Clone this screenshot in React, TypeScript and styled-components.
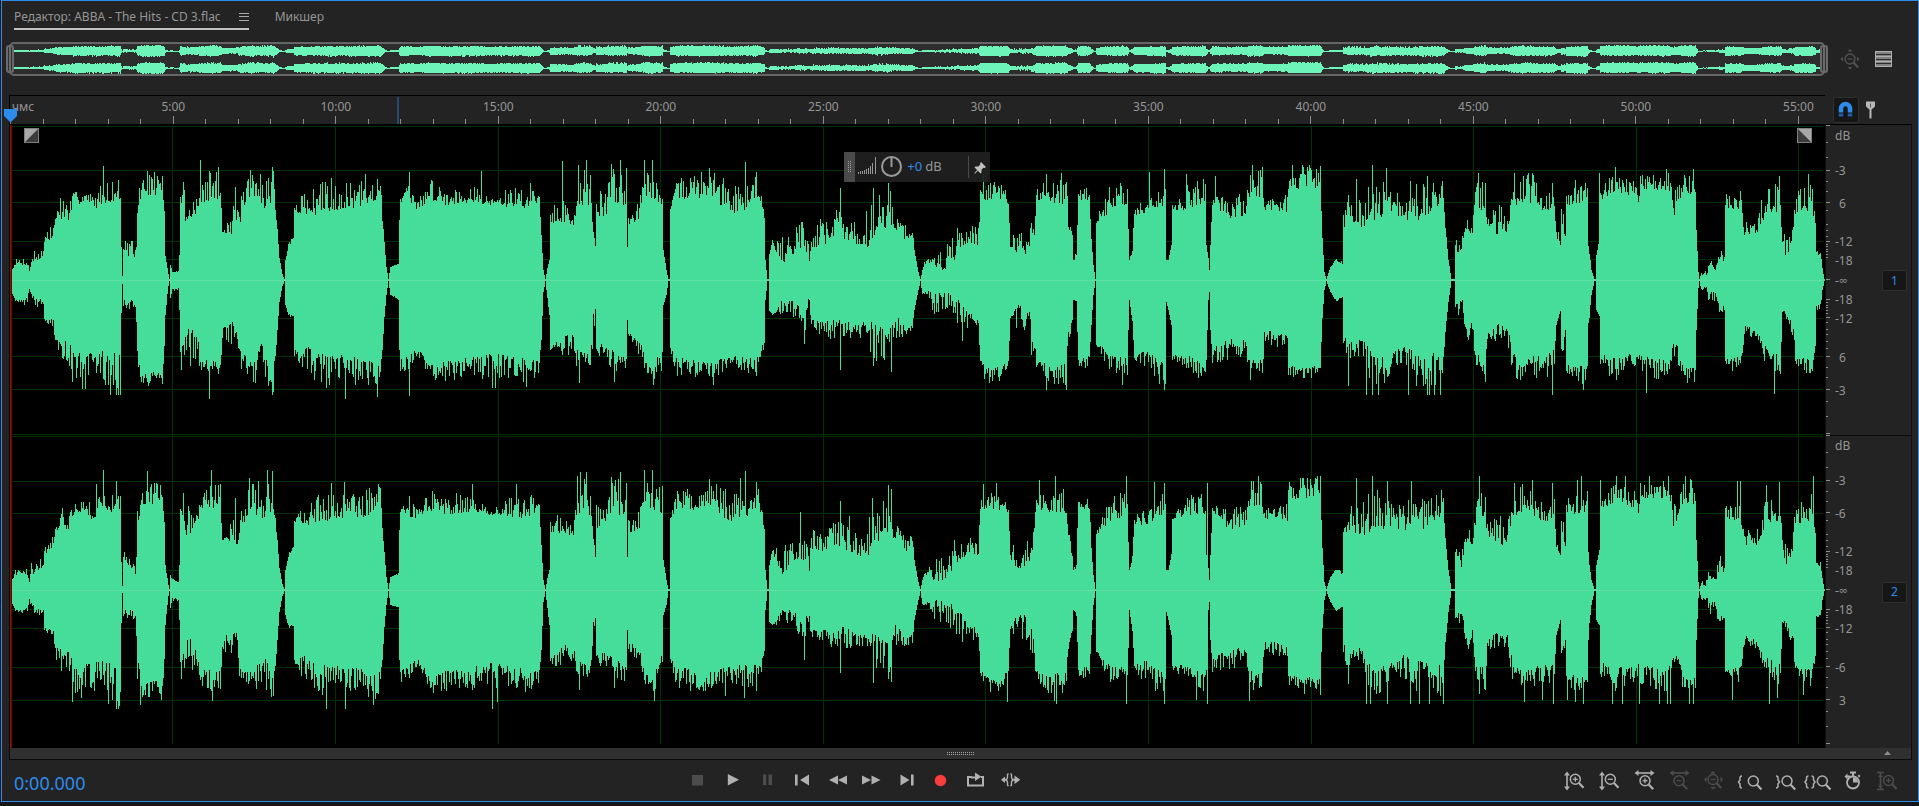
import React from 'react';
import styled, { createGlobalStyle } from 'styled-components';

const ACCENT = '#2d8ceb';
const ICON = '#b0b0b0';
const DIM = '#4c4c4c';

const GlobalStyle = createGlobalStyle`
  * { box-sizing: border-box; }
  body {
    margin: 0;
    background: #161616;
    color: #969696;
    font: 12px/16px "Noto Sans", "Open Sans", sans-serif;
  }
  button, input {
    margin: 0;
    padding: 0;
    border: 0;
    background: none;
    color: inherit;
    font: inherit;
  }
  svg { display: block; }
`;

/* ---------- waveform data ---------- */

// Envelope points: position, quiet and loud level above the axis, quiet and loud level below it.
type Point = [number, number, number, number, number];

const ENVELOPE: Point[] = [
  [2, 9, 9, 12, 12], [6, 15, 21, 20, 21], [18, 15, 22, 17, 26], [20, 8, 9, 8, 9], [22, 15, 28, 13, 19],
  [28, 17, 34, 19, 27], [34, 25, 31, 19, 25], [35, 34, 49, 38, 41], [44, 42, 55, 39, 48], [46, 60, 64, 58, 68],
  [52, 60, 82, 59, 85], [61, 60, 80, 63, 84], [63, 74, 86, 73, 100], [75, 78, 93, 73, 108], [83, 70, 85, 72, 100],
  [93, 76, 96, 70, 100], [111, 80, 100, 75, 115], [112, 28, 38, 30, 34], [113, 3, 5, 3, 5], [114, 30, 40, 20, 30],
  [126, 15, 37, 20, 28], [127, 32, 34, 40, 50], [128, 63, 90, 63, 90], [132, 85, 100, 95, 106], [146, 85, 108, 90, 110],
  [153, 88, 105, 95, 105], [155, 68, 75, 62, 85], [156, 23, 25, 33, 35], [159, 5, 6, 5, 6], [160, 1, 1, 1, 1],
  [161, 15, 15, 18, 18], [163, 8, 11, 8, 11], [169, 8, 9, 8, 11], [170, 25, 25, 30, 30], [171, 80, 88, 72, 94],
  [177, 55, 98, 50, 70], [181, 55, 78, 48, 85], [189, 70, 85, 54, 75], [190, 75, 90, 80, 95], [201, 78, 112, 80, 100],
  [211, 80, 105, 80, 102], [213, 48, 50, 48, 60], [222, 45, 70, 42, 64], [228, 45, 75, 40, 58], [230, 55, 80, 68, 90],
  [236, 70, 95, 75, 90], [244, 78, 110, 85, 105], [252, 70, 105, 60, 90], [264, 78, 110, 85, 115], [266, 65, 75, 75, 78],
  [268, 50, 52, 50, 52], [270, 22, 22, 22, 22], [273, 6, 6, 6, 6], [275, 1, 1, 1, 1], [276, 20, 20, 25, 25],
  [279, 32, 38, 33, 38], [284, 42, 43, 36, 38], [285, 68, 72, 70, 80], [295, 65, 88, 65, 90], [305, 65, 90, 70, 100],
  [317, 68, 100, 75, 105], [338, 72, 95, 75, 100], [358, 72, 100, 80, 110], [371, 85, 102, 82, 110], [373, 55, 70, 70, 70],
  [375, 38, 38, 37, 37], [377, 13, 13, 15, 15], [379, 1, 1, 1, 1], [381, 13, 13, 15, 15], [389, 15, 17, 17, 20],
  [390, 60, 60, 70, 70], [391, 78, 82, 80, 92], [399, 74, 95, 75, 90], [409, 70, 80, 68, 75], [420, 80, 100, 85, 100],
  [440, 74, 90, 80, 100], [460, 78, 97, 78, 100], [481, 75, 80, 72, 95], [501, 72, 92, 76, 100], [522, 72, 96, 80, 100],
  [530, 80, 90, 80, 95], [532, 45, 45, 60, 60], [534, 10, 10, 12, 12], [536, 1, 1, 1, 1], [538, 12, 12, 18, 18],
  [540, 20, 20, 35, 35], [541, 55, 75, 68, 75], [554, 58, 80, 55, 78], [564, 52, 60, 55, 70], [568, 75, 115, 70, 90],
  [581, 75, 105, 75, 90], [584, 45, 60, 32, 60], [586, 33, 34, 28, 30], [587, 60, 90, 65, 75], [595, 58, 85, 60, 80],
  [601, 75, 112, 65, 90], [617, 75, 108, 75, 90], [618, 33, 33, 40, 40], [619, 55, 70, 50, 60], [630, 60, 80, 62, 75],
  [633, 85, 95, 60, 85], [635, 85, 110, 80, 95], [643, 80, 100, 90, 105], [653, 75, 103, 60, 90], [654, 30, 30, 25, 25],
  [657, 10, 10, 15, 15], [659, 1, 1, 1, 1], [660, 1, 1, 1, 1], [661, 70, 72, 68, 70], [668, 82, 100, 75, 100],
  [684, 80, 105, 80, 100], [700, 85, 110, 82, 100], [721, 66, 95, 75, 92], [735, 70, 98, 75, 97], [749, 84, 105, 75, 100],
  [755, 60, 65, 60, 65], [756, 20, 20, 20, 20], [758, 1, 1, 1, 1], [759, 1, 1, 1, 1], [760, 25, 30, 30, 35],
  [763, 38, 42, 35, 35], [772, 14, 43, 20, 35], [782, 25, 45, 20, 33], [790, 30, 60, 25, 45], [796, 30, 55, 30, 60],
  [800, 18, 30, 15, 30], [802, 30, 65, 40, 50], [815, 35, 60, 40, 55], [827, 45, 72, 40, 60], [837, 40, 65, 35, 60],
  [847, 35, 55, 45, 55], [859, 32, 70, 40, 65], [866, 45, 80, 45, 80], [880, 55, 95, 50, 90], [886, 50, 70, 35, 60],
  [896, 38, 55, 45, 55], [903, 45, 58, 45, 55], [905, 30, 30, 30, 30], [909, 8, 8, 10, 10], [911, 1, 1, 1, 1],
  [913, 10, 10, 14, 15], [915, 15, 18, 12, 15], [925, 8, 28, 10, 32], [935, 10, 35, 10, 30], [945, 20, 50, 15, 42],
  [957, 35, 50, 30, 50], [969, 35, 55, 40, 50], [971, 80, 90, 80, 95], [982, 80, 98, 90, 105], [996, 80, 92, 82, 98],
  [999, 75, 80, 80, 82], [1001, 30, 40, 35, 40], [1008, 20, 55, 25, 50], [1019, 25, 50, 25, 50], [1025, 45, 65, 50, 75],
  [1027, 80, 90, 80, 90], [1039, 78, 105, 85, 105], [1057, 75, 105, 80, 105], [1059, 50, 60, 50, 60], [1063, 32, 50, 35, 48],
  [1064, 20, 20, 20, 20], [1067, 20, 33, 20, 28], [1069, 80, 90, 80, 90], [1080, 80, 92, 75, 85], [1082, 40, 45, 45, 45],
  [1084, 15, 15, 15, 15], [1086, 1, 1, 1, 1], [1087, 55, 60, 60, 65], [1100, 68, 95, 75, 90], [1118, 75, 98, 78, 98],
  [1120, 20, 20, 20, 20], [1123, 28, 35, 40, 42], [1125, 65, 75, 75, 80], [1137, 65, 80, 70, 95], [1156, 75, 98, 85, 108],
  [1157, 20, 20, 22, 22], [1159, 20, 20, 30, 30], [1162, 35, 36, 45, 45], [1163, 70, 75, 75, 80], [1178, 70, 95, 75, 90],
  [1196, 75, 100, 85, 102], [1197, 35, 35, 80, 80], [1199, 22, 22, 20, 20], [1200, 10, 10, 12, 12], [1201, 35, 35, 50, 50],
  [1203, 75, 85, 70, 85], [1219, 60, 85, 55, 80], [1237, 65, 85, 60, 75], [1239, 82, 105, 80, 100], [1253, 82, 112, 80, 100],
  [1255, 70, 80, 50, 60], [1278, 68, 85, 55, 72], [1279, 90, 110, 85, 95], [1294, 92, 112, 88, 98], [1311, 90, 112, 85, 98],
  [1313, 42, 42, 38, 38], [1315, 8, 8, 10, 10], [1317, 1, 1, 1, 1], [1321, 13, 13, 12, 12], [1327, 20, 23, 20, 22],
  [1333, 15, 18, 16, 18], [1334, 48, 70, 50, 65], [1339, 60, 88, 62, 80], [1353, 52, 85, 55, 75], [1363, 60, 105, 75, 105],
  [1378, 60, 95, 75, 100], [1394, 60, 85, 65, 85], [1410, 58, 95, 70, 110], [1434, 75, 95, 75, 110], [1436, 50, 55, 50, 55],
  [1439, 20, 20, 22, 22], [1442, 1, 1, 1, 1], [1445, 1, 1, 1, 1], [1446, 30, 42, 25, 40], [1453, 20, 43, 20, 30],
  [1455, 45, 50, 40, 45], [1459, 48, 65, 55, 60], [1463, 45, 48, 38, 50], [1466, 65, 95, 75, 85], [1476, 68, 102, 75, 100],
  [1478, 55, 65, 50, 60], [1488, 45, 75, 42, 60], [1498, 45, 70, 42, 60], [1503, 75, 85, 70, 95], [1512, 75, 105, 80, 100],
  [1523, 75, 105, 75, 95], [1533, 68, 85, 75, 100], [1545, 70, 90, 70, 90], [1547, 42, 60, 45, 45], [1551, 35, 36, 30, 31],
  [1552, 60, 75, 60, 75], [1556, 40, 60, 50, 65], [1557, 75, 90, 85, 95], [1578, 78, 98, 85, 105], [1579, 30, 40, 40, 50],
  [1582, 10, 10, 15, 15], [1585, 1, 1, 1, 1], [1586, 1, 1, 1, 1], [1587, 25, 25, 30, 30], [1590, 40, 41, 35, 36],
  [1591, 80, 95, 70, 85], [1606, 88, 106, 78, 100], [1625, 82, 100, 72, 90], [1629, 76, 85, 72, 85], [1631, 90, 106, 75, 95],
  [1659, 90, 108, 80, 102], [1664, 60, 85, 62, 75], [1669, 75, 95, 65, 85], [1674, 88, 105, 85, 100], [1686, 85, 112, 88, 105],
  [1687, 50, 50, 50, 50], [1689, 8, 8, 8, 8], [1690, 1, 1, 1, 1], [1692, 5, 9, 8, 10], [1697, 4, 10, 6, 10],
  [1700, 12, 22, 12, 25], [1706, 8, 15, 12, 20], [1710, 20, 35, 25, 38], [1715, 17, 25, 25, 30], [1716, 70, 85, 80, 85],
  [1731, 70, 90, 75, 95], [1735, 45, 60, 45, 55], [1747, 45, 60, 50, 58], [1755, 60, 92, 65, 80], [1771, 70, 95, 75, 95],
  [1773, 35, 55, 30, 33], [1777, 22, 45, 32, 40], [1784, 40, 65, 45, 60], [1786, 65, 85, 75, 85], [1802, 70, 100, 80, 100],
  [1806, 55, 62, 65, 70], [1807, 20, 28, 25, 30], [1811, 25, 30, 22, 30], [1813, 12, 12, 10, 10], [1815, 1, 1, 1, 1],
];

type Peaks = Record<number, number>;

const PEAKS_UP_1: Peaks = {
  51: 82, 94: 114, 138: 109, 145: 108, 174: 98, 191: 120, 200: 108, 209: 113, 226: 93, 241: 110, 251: 106, 263: 113,
  264: 109, 322: 102, 356: 106, 400: 108, 422: 100, 472: 109, 553: 119, 577: 120, 569: 115, 602: 116, 611: 120,
  617: 112, 635: 120, 643: 120, 700: 112, 736: 118, 747: 108, 831: 92, 864: 92, 879: 97, 974: 106, 1037: 106,
  1052: 107, 1140: 108, 1155: 111, 1177: 106, 1206: 104, 1243: 115, 1253: 113, 1283: 115, 1293: 115, 1300: 115,
  1311: 114, 1347: 101, 1363: 115, 1377: 112, 1401: 99, 1418: 104, 1433: 99, 1469: 107, 1505: 107, 1519: 107,
  1523: 107, 1543: 97, 1566: 100, 1590: 107, 1606: 113, 1657: 111, 1684: 111, 1770: 104, 1799: 106,
};

const PEAKS_DOWN_1: Peaks = {
  76: 109, 101: 115, 107: 115, 109: 115, 200: 119, 263: 115, 264: 112, 317: 108, 336: 119, 368: 117, 400: 116,
  483: 108, 486: 108, 517: 107, 570: 103, 605: 102, 644: 105, 704: 105, 831: 90, 864: 86, 882: 92, 795: 64,
  953: 61, 1022: 75, 1037: 110, 1057: 110, 1113: 105, 1155: 110, 1339: 106, 1357: 115, 1363: 115, 1369: 115,
  1399: 115, 1418: 115, 1420: 115, 1425: 115, 1431: 115, 1543: 115, 1574: 110, 1637: 113, 1765: 114,
};

const PEAKS_UP_2: Peaks = {
  87: 106, 94: 120, 107: 109, 138: 119, 145: 107, 174: 97, 202: 120, 209: 105, 226: 92, 240: 112, 258: 120,
  263: 119, 322: 107, 335: 108, 369: 106, 423: 99, 447: 97, 463: 106, 507: 106, 568: 114, 571: 118, 577: 118,
  602: 113, 611: 118, 617: 107, 635: 120, 643: 120, 653: 104, 707: 106, 731: 112, 736: 119, 747: 108, 791: 78,
  831: 89, 840: 74, 863: 92, 879: 105, 882: 101, 974: 106, 987: 107, 1030: 110, 1046: 114, 1117: 114, 1145: 108,
  1155: 107, 1198: 107, 1242: 109, 1249: 114, 1294: 112, 1308: 114, 1311: 114, 1347: 112, 1363: 114, 1378: 109,
  1402: 109, 1432: 100, 1470: 114, 1505: 107, 1523: 110, 1543: 107, 1568: 110, 1572: 114, 1591: 110, 1607: 114,
  1616: 114, 1640: 114, 1659: 114, 1676: 114, 1682: 110, 1728: 109, 1731: 109, 1757: 105, 1770: 108, 1804: 114,
};

const PEAKS_DOWN_2: Peaks = {
  63: 112, 72: 108, 99: 114, 107: 119, 109: 119, 131: 115, 152: 110, 203: 111, 264: 106, 317: 119, 336: 119,
  364: 115, 424: 103, 483: 119, 488: 112, 570: 100, 605: 98, 645: 111, 716: 106, 735: 108, 795: 70, 831: 83,
  864: 93, 882: 92, 953: 52, 998: 112, 1045: 111, 1047: 114, 1117: 114, 1155: 114, 1187: 110, 1198: 114, 1240: 111,
  1295: 104, 1311: 105, 1339: 94, 1357: 114, 1361: 114, 1378: 114, 1401: 114, 1410: 114, 1420: 114, 1434: 114,
  1470: 104, 1515: 112, 1533: 110, 1544: 114, 1558: 110, 1566: 112, 1574: 114, 1603: 114, 1613: 114, 1630: 114,
  1650: 114, 1658: 114, 1661: 114, 1680: 114, 1684: 114, 1723: 110, 1760: 114, 1768: 108, 1794: 105,
};

const random = (seed: number) => {
  let s = seed;
  return () => {
    s = (Math.imul(s, 1664525) + 1013904223) >>> 0;
    return s / 4294967296;
  };
};

const buildWave = (axis: number, scale: number, seed: number, peaksUp: Peaks = {}, peaksDown: Peaks = {}) => {
  const next = random(seed);
  let d = '';
  let p = 0;
  for (let x = 2; x < 1816; x++) {
    while (p < ENVELOPE.length - 2 && ENVELOPE[p + 1][0] <= x) p++;
    const a = ENVELOPE[p];
    const b = ENVELOPE[p + 1];
    const t = Math.min(1, (x - a[0]) / (b[0] - a[0]));
    const at = (i: number) => a[i] + (b[i] - a[i]) * t;
    const pick = (lo: number, hi: number) => lo + (hi - lo) * Math.pow(next(), 1.4) * 1.08;
    const up = Math.max(pick(at(1), at(2)), peaksUp[x] || 0);
    const down = Math.max(pick(at(3), at(4)), peaksDown[x] || 0);
    const y0 = Math.round(axis - up * scale);
    const y1 = Math.max(y0 + 1, Math.round(axis + down * scale));
    d += `M${x} ${y0}h1V${y1}h-1z`;
  }
  return d;
};

const CHANNELS = [
  {
    id: 1,
    axis: 155,
    grid: [1, 45, 77, 116, 134, 193, 231, 264, 309],
    d: buildWave(155, 1, 7, PEAKS_UP_1, PEAKS_DOWN_1),
  },
  {
    id: 2,
    axis: 465,
    grid: [311, 356, 388, 445, 484, 503, 542, 575],
    d: buildWave(465, 1, 91, PEAKS_UP_2, PEAKS_DOWN_2),
  },
];
const OVERVIEW = buildWave(7, 0.056, 11) + buildWave(24, 0.056, 23);

/* ---------- frame ---------- */

const Page = styled.main`
  display: flex;
  min-height: 100vh;
  padding: 0 0 4px 1px;
`;

const Panel = styled.section`
  display: flex;
  flex: 1;
  flex-direction: column;
  min-width: 0;
  border: 1px solid ${ACCENT};
  background: #232323;
`;

const Tabs = styled.nav`
  display: flex;
  align-items: flex-start;
  gap: 26px;
  height: 41px;
  padding: 8px 12px 0;
`;

const Tab = styled.button<{ $active?: boolean }>`
  display: flex;
  align-items: center;
  gap: 18px;
  height: 21px;
  padding-bottom: 3px;
  border-bottom: 2px solid ${(p) => (p.$active ? '#c0c0c0' : 'transparent')};
  white-space: nowrap;
`;

const OverviewRow = styled.div`
  display: flex;
  height: 34px;
  margin-bottom: 19px;
  padding-left: 7px;
`;

const OverviewBox = styled.div`
  position: relative;
  flex: 1;
  border: 2px solid #666;
  border-radius: 5px;
  background: #2d2d2d;
`;

const Handle = styled.button<{ $side: 'left' | 'right' }>`
  position: absolute;
  top: 1px;
  ${(p) => p.$side}: -5px;
  width: 8px;
  height: 28px;
  border: 2px solid #6a6a6a;
  border-radius: 3px;
  background: linear-gradient(90deg, #303030 1px, #6a6a6a 1px 3px, #303030 3px);
`;

const SideTools = styled.div<{ $left?: number; $gap?: number }>`
  display: flex;
  align-items: center;
  gap: ${(p) => p.$gap || 0}px;
  width: 93px;
  padding-left: ${(p) => p.$left || 0}px;
`;

const ToolButton = styled.button<{ $pressed?: boolean }>`
  width: 26px;
  height: 26px;
  border: 1px solid ${(p) => (p.$pressed ? '#303030' : 'transparent')};
  border-radius: 3px;
  background: ${(p) => (p.$pressed ? '#161616' : 'none')};
`;

const RulerRow = styled.div`
  display: flex;
  height: 30px;
  padding-left: 7px;
`;

const Ruler = styled.div`
  position: relative;
  flex: 1;
  border: solid #000;
  border-width: 1px 0 1px 1px;
`;

const Playhead = styled.svg`
  position: absolute;
  left: -6px;
  bottom: 1px;
`;

const Workspace = styled.div`
  display: flex;
  flex: 1;
  min-height: 480px;
  margin: 0 6px 0 7px;
`;

const WaveArea = styled.div`
  position: relative;
  flex: 1;
  background: #000;
`;

const FadeButton = styled.button<{ $side: 'left' | 'right' }>`
  position: absolute;
  top: 3px;
  ${(p) => p.$side}: ${(p) => (p.$side === 'left' ? 15 : 13)}px;
  width: 15px;
  height: 15px;
`;

const ScaleColumn = styled.div`
  position: relative;
  display: flex;
  flex-direction: column;
  width: 87px;
  border: solid #101010;
  border-width: 0 1px 0 1px;
  box-shadow: 0 -1px #000;
`;

const Fill = styled.svg`
  position: absolute;
  inset: 0;
  width: 100%;
  height: 100%;
`;

const ChannelSlot = styled.div`
  position: relative;
  display: flex;
  flex: 1;
  align-items: center;
  justify-content: flex-end;
  padding-right: 4px;
`;

const ChannelButton = styled.button`
  width: 25px;
  height: 21px;
  border: 1px solid #303030;
  border-radius: 2px;
  background: #161616;
  color: ${ACCENT};
`;

const Hud = styled.div`
  position: absolute;
  top: 27px;
  left: 46%;
  display: flex;
  align-items: center;
  width: 146px;
  height: 30px;
  background: rgba(33, 33, 33, 0.92);
`;

const HudGrip = styled.div`
  display: flex;
  align-items: center;
  justify-content: center;
  width: 11px;
  height: 30px;
  margin-right: 3px;
  background: #4a4a4a;
`;

const Gain = styled.label`
  display: flex;
  flex: 1;
  gap: 2px;
  margin-left: 5px;
  padding-bottom: 2px;
  font-size: 13px;
`;

const GainInput = styled.input`
  width: 16px;
  color: ${ACCENT};
`;

const HudDivider = styled.div`
  width: 1px;
  height: 22px;
  background: #4a4a4a;
`;

const Scrollbar = styled.div`
  display: flex;
  align-items: center;
  justify-content: center;
  position: relative;
  height: 12px;
  margin: 0 6px 0 7px;
  border: solid #0a0a0a;
  border-width: 0 1px 1px 1px;
  background: #303030;
`;

const Collapse = styled.button`
  position: absolute;
  right: 20px;
  top: 3px;
`;

const Footer = styled.footer`
  display: flex;
  align-items: flex-start;
  height: 41px;
`;

const TimeCode = styled.output`
  width: 151px;
  padding: 11px 0 0 12px;
  color: ${ACCENT};
  font-size: 18px;
  line-height: 24px;
`;

const Transport = styled.div`
  display: flex;
  flex: 1;
  justify-content: center;
`;

const ZoomTools = styled.div`
  display: flex;
  padding-right: 11px;
`;

const IconButton = styled.button`
  width: 35px;
  height: 40px;
`;

/* ---------- icons ---------- */

const Icon = ({ children, w = 35, h = 40 }: { children: React.ReactNode; w?: number; h?: number }) => (
  <svg width={w} height={h} viewBox={`0 0 ${w} ${h}`} fill="none" aria-hidden="true">
    {children}
  </svg>
);

type LensProps = { x: number; y: number; sign?: '+' | '-'; color?: string };

const Lens = ({ x, y, sign, color = ICON }: LensProps) => (
  <g stroke={color}>
    <circle cx={x} cy={y} r="5" strokeWidth="1.5" />
    {sign && <path d={`M${x - 2.5} ${y}h5`} strokeWidth="1.3" />}
    {sign === '+' && <path d={`M${x} ${y - 2.5}v5`} strokeWidth="1.3" />}
    <path d={`M${x + 3.7} ${y + 3.7}l4.5 4.8`} strokeWidth="2.2" />
  </g>
);

const VArrow = () => (
  <>
    <path d="M10 14V28" stroke={ICON} strokeWidth="1.6" />
    <path d="M7 15.5L10 11.5L13 15.5zM7 26.5L10 30.5L13 26.5z" fill={ICON} />
  </>
);

const HArrow = ({ color = ICON }: { color?: string }) => (
  <>
    <path d="M10 13H25" stroke={color} strokeWidth="1.6" />
    <path d="M11.5 10L7.5 13L11.5 16zM23.5 10L27.5 13L23.5 16z" fill={color} />
  </>
);

const BraceOpen = ({ x }: { x: number }) => (
  <path d={`M${x + 3} 16q-2 0-2 2v2l-1.5 2l1.5 2v2q0 2 2 2`} stroke={ICON} strokeWidth="1.5" />
);
const BraceClose = ({ x }: { x: number }) => (
  <path d={`M${x} 16q2 0 2 2v2l1.5 2l-1.5 2v2q0 2-2 2`} stroke={ICON} strokeWidth="1.5" />
);

const TRANSPORT: { label: string; icon: React.ReactNode }[] = [
  { label: 'Стоп', icon: <rect x="12" y="15" width="11" height="10.5" fill={DIM} /> },
  { label: 'Воспроизвести', icon: <path d="M12.8 14L24 19.8L12.8 25.5z" fill={ICON} /> },
  { label: 'Пауза', icon: <path d="M13 14.5h3.3V25H13zM18.5 14.5h3.5V25h-3.5z" fill={DIM} /> },
  { label: 'В начало', icon: <path d="M10 14.5h2.6V25.5H10zM24 14.5V25.5L15 20z" fill={ICON} /> },
  { label: 'Назад', icon: <path d="M18 15.5V24.5L9 20zM27 15.5V24.5L18 20z" fill={ICON} /> },
  { label: 'Вперед', icon: <path d="M7 15.5V24.5L16 20zM16.5 15.5V24.5L25.5 20z" fill={ICON} /> },
  { label: 'В конец', icon: <path d="M10.5 14.5V25.5L19.5 20zM21 14.5h2.6V25.5H21z" fill={ICON} /> },
  { label: 'Запись', icon: <circle cx="15.5" cy="20.5" r="5.8" fill="#f93c3c" /> },
  {
    label: 'Петля',
    icon: (
      <>
        <path d="M12 17H8V25.5H23V17H21" stroke={ICON} strokeWidth="2" />
        <path d="M11 16.5h4V12.5L21.5 16.8L15 21v-2.5h-4z" fill={ICON} />
      </>
    ),
  },
  {
    label: 'Пропустить выделенное',
    icon: (
      <>
        <path d="M6 19.8L10 16.5V23zM25.3 19.8L19.5 15.5V24z" fill={ICON} />
        <path d="M9 19.8h2.500M17.500 19.800h3" stroke={ICON} strokeWidth="2" />
        <path d="M13.500 13.500l-1 1v3l-1 2.300l1 2.300v3l1 1M15.500 13.500l1 1v3l1 2.300l-1 2.300v3l-1 1" stroke={ICON} strokeWidth="1.400" />
      </>
    ),
  },
];

const ZOOMS: { label: string; icon: React.ReactNode }[] = [
  { label: 'Увеличить амплитуду', icon: <><VArrow /><Lens x={18.3} y={19.3} sign="+" /></> },
  { label: 'Уменьшить амплитуду', icon: <><VArrow /><Lens x={18.3} y={19.3} sign="-" /></> },
  { label: 'Увеличить время', icon: <><HArrow /><Lens x={18} y={20.7} sign="+" /></> },
  { label: 'Уменьшить время', icon: <><HArrow color={DIM} /><Lens x={17} y={20.7} sign="-" color={DIM} /></> },
  {
    label: 'Показать полностью',
    icon: (
      <>
        <Lens x={16} y={19.5} sign="-" color={DIM} />
        <path d="M13 13.500L16 11l3 2.500zM13 27L16 29.500l3-2.500zM9.500 16.500L7 19.500l2.500 3zM23.500 16.500L26 19.500l-2.500 3z" fill={DIM} />
      </>
    ),
  },
  { label: 'Масштаб до начала', icon: <><BraceOpen x={7} /><Lens x={21.3} y={21} /></> },
  { label: 'Масштаб до конца', icon: <><BraceClose x={9} /><Lens x={20} y={21} /></> },
  { label: 'Масштаб до выделения', icon: <><BraceOpen x={3.5} /><BraceClose x={9.5} /><Lens x={20.3} y={21} /></> },
  {
    label: 'Масштаб по времени',
    icon: (
      <>
        <circle cx="16" cy="22.500" r="6" stroke={ICON} strokeWidth="1.800" />
        <path d="M16 22.500V17.500A5 5 0 0 1 21 22.500zM13 11.500h6v2h-2v3h-2v-3h-2zM22 14.500l1.500 1.500-1.500 1.500-1.500-1.500zM7.500 16.500l3-3v2h3v2h-3v2z" fill={ICON} />
      </>
    ),
  },
  {
    label: 'Масштаб дорожки',
    icon: (
      <>
        <path d="M8.500 13V29M5 12.500h7M5 29.500h7" stroke={DIM} strokeWidth="1.600" />
        <path d="M6 17l2.500-3l2.500 3zM6 25.500l2.500 3l2.500-3z" fill={DIM} />
        <Lens x={16.5} y={20.5} sign="+" color={DIM} />
      </>
    ),
  },
];

/* ---------- scales ---------- */

const pct = (value: number, total: number) => `${(value / total) * 100}%`;
const WAVE_W = 1816;
const WAVE_H = 623;
const MINUTE = 32.52;
const minuteX = (m: number) => 0.8 + m * MINUTE;

const LONG_TICKS = [0, 45, 77, 116, 154, 174, 192, 231, 264, 308];
const SHORT_TICKS = [
  17, 32, 56, 66, 85, 99, 105, 111, 119, 121, 124, 126, 129, 132, 177, 180, 182, 185, 188, 197, 204, 209, 216, 223,
  242, 252, 276, 291,
];

const LABEL_Y = [10, 45, 78, 116, 135, 155, 174, 193, 232, 265];
const LABELS = [
  ['dB', '-3', '6', '-12', '-18', '-∞', '-18', '-12', '6', '-3'],
  ['dB', '-3', '-6', '-12', '-18', '-∞', '-18', '-12', '-6', '3'],
];

const labelX = (text: string) => (/^\d/.test(text) ? 13 : 9);

const DbScale = () => (
  <Fill aria-hidden="true">
    {[0, 310].map((top, channel) => (
      <g key={top}>
        <g stroke="#8c8c8c" shapeRendering="crispEdges">
          {LONG_TICKS.map((y) => (
            <line key={y} x1="0" x2="4" y1={pct(top + y + 0.5, WAVE_H)} y2={pct(top + y + 0.5, WAVE_H)} />
          ))}
          {SHORT_TICKS.map((y) => (
            <line key={y} x1="0" x2="2" y1={pct(top + y + 0.5, WAVE_H)} y2={pct(top + y + 0.5, WAVE_H)} />
          ))}
        </g>
        {LABELS[channel].map((text, i) => (
          <text key={i} x={labelX(text)} y={pct(top + LABEL_Y[i], WAVE_H)} dy="5" fill="#969696">
            {text}
          </text>
        ))}
      </g>
    ))}
    <line x1="4" x2="100%" y1={pct(310.5, WAVE_H)} y2={pct(310.5, WAVE_H)} stroke="#0a0a0a" shapeRendering="crispEdges" />
  </Fill>
);

const TimeRuler = () => (
  <Fill aria-hidden="true">
    <text x="2" y="15" fill="#969696">чмс</text>
    {Array.from({ length: 56 }, (_, i) => i).map((i) => {
      const x = pct(minuteX(i), WAVE_W);
      return (
        <line key={i} x1={x} x2={x} y1={i % 5 ? 23 : 20} y2="28" stroke="#8c8c8c" shapeRendering="crispEdges" />
      );
    })}
    {Array.from({ length: 11 }, (_, i) => (i + 1) * 5).map((m) => (
      <text key={m} x={pct(minuteX(m), WAVE_W)} y="15" textAnchor="middle" fill="#969696">
        {m}:00
      </text>
    ))}
    <line x1="21.4%" x2="21.4%" y1="1" y2="28" stroke="#264a70" strokeWidth="2" shapeRendering="crispEdges" />
  </Fill>
);

const Waveform = () => (
  <Fill viewBox={`0 0 ${WAVE_W} ${WAVE_H}`} preserveAspectRatio="none" shapeRendering="crispEdges" role="img" aria-label="Форма сигнала">
    <g stroke="#013201">
      {CHANNELS.map(({ id, grid }) => (
        <path key={id} d={grid.map((y) => `M2 ${y + 0.5}H1814`).join('')} />
      ))}
      {Array.from({ length: 11 }, (_, i) => (
        <path key={i} d={`M${Math.round(minuteX((i + 1) * 5)) + 0.5} 1V619`} />
      ))}
    </g>
    {CHANNELS.map(({ id, axis, d }) => (
      <g key={id}>
        <path d={d} fill="#46dc9a" />
        <path d={`M2 ${axis + 0.5}H1814`} stroke="#5fdfa4" />
      </g>
    ))}
    <path d="M1.5 0V623" stroke="#b80000" />
    <path d="M2.5 0V623" stroke="#3a1a08" />
  </Fill>
);

const Dots = ({ cols, rows, step }: { cols: number; rows: number; step: number }) => (
  <svg width={cols * step} height={rows * step} shapeRendering="crispEdges" aria-hidden="true">
    {Array.from({ length: cols * rows }, (_, i) => (
      <rect key={i} x={(i % cols) * step} y={Math.floor(i / cols) * step} width="1" height="1" fill="#a0a0a0" />
    ))}
  </svg>
);

const App = () => (
  <>
    <GlobalStyle />
    <Page>
      <Panel>
        <Tabs>
          <Tab $active>
            Редактор: ABBA - The Hits - CD 3.flac
            <svg width="10" height="10" aria-hidden="true">
              <path d="M0 1.500h10M0 4.500h10M0 8.500h10" stroke="#a8a8a8" shapeRendering="crispEdges" />
            </svg>
          </Tab>
          <Tab>Микшер</Tab>
        </Tabs>

        <OverviewRow>
          <OverviewBox>
            <Fill viewBox="2 0 1812 30" preserveAspectRatio="none" shapeRendering="crispEdges" aria-hidden="true">
              <path d={OVERVIEW} fill="#6df5b9" />
            </Fill>
            <Handle $side="left" aria-label="Начало области" />
            <Handle $side="right" aria-label="Конец области" />
          </OverviewBox>
          <SideTools $left={12} $gap={7}>
            <ToolButton aria-label="Показать полностью">
              <Icon w={26} h={26}>
                <Lens x={12} y={12} sign="-" color="#505050" />
                <path d="M9.5 4.5L12 2l2.5 2.5zM9.5 20L12 22.5l2.5-2.5zM5 9.500L2.500 12L5 14.500zM19 9.500L21.500 12L19 14.500z" fill="#505050" />
              </Icon>
            </ToolButton>
            <ToolButton aria-label="Список">
              <Icon w={24} h={26}>
                <rect x="4.500" y="4.500" width="16" height="15" fill="#808080" stroke="#b0b0b0" />
                <path d="M5 7.500h15M5 12.500h15M5 16.500h15" stroke="#2c2c2c" />
                <path d="M4 9.500h17M4 14.500h17" stroke="#b0b0b0" />
              </Icon>
            </ToolButton>
          </SideTools>
        </OverviewRow>

        <RulerRow>
          <Ruler>
            <TimeRuler />
            <Playhead width="13" height="14" viewBox="0 0 13 14" aria-hidden="true">
              <path d="M0 0H13V7L6.500 13.500L0 7z" fill={ACCENT} />
            </Playhead>
          </Ruler>
          <SideTools $left={8}>
            <ToolButton $pressed aria-label="Привязка">
              <Icon w={24} h={24}>
                <path d="M7 14.500V10.500a4.500 4.500 0 0 1 9 0V14.500" stroke={ACCENT} strokeWidth="4.500" />
                <path d="M7 15.500v3M16 15.500v3" stroke="#1f5fa3" strokeWidth="4.500" />
              </Icon>
            </ToolButton>
            <ToolButton aria-label="Добавить маркер">
              <Icon w={24} h={24}>
                <path d="M6 3.500h9v5l-3.500 3v9h-2v-9L6 8.500z" fill="#b8b8b8" />
                <rect x="10" y="5.500" width="1" height="4" fill="#555" />
              </Icon>
            </ToolButton>
          </SideTools>
        </RulerRow>

        <Workspace>
          <WaveArea>
            <Waveform />
            <FadeButton $side="left" aria-label="Нарастание">
              <Icon w={15} h={15}>
                <rect x="0.500" y="0.500" width="14" height="14" fill="#3c3c3c" stroke="#808080" />
                <path d="M1 1H14L1 14z" fill="#a8a8a8" />
              </Icon>
            </FadeButton>
            <FadeButton $side="right" aria-label="Затухание">
              <Icon w={15} h={15}>
                <rect x="0.500" y="0.500" width="14" height="14" fill="#3c3c3c" stroke="#808080" />
                <path d="M1 1H14V14z" fill="#a8a8a8" />
              </Icon>
            </FadeButton>
            <Hud>
              <HudGrip><Dots cols={2} rows={6} step={2} /></HudGrip>
              <Icon w={19} h={30}>
                <path d="M.5 22v-2M2.500 22v-3M4.500 22v-3M6.500 22v-4M8.500 22v-5M10.500 22v-6M12.500 22v-8M14.500 22v-11M17.500 22V5" stroke="#969696" />
              </Icon>
              <Icon w={25} h={30}>
                <circle cx="14.500" cy="14.500" r="9.500" stroke="#9a9a9a" strokeWidth="2" />
                <path d="M14.500 5v10" stroke="#9a9a9a" strokeWidth="2" />
              </Icon>
              <Gain>
                <GainInput defaultValue="+0" aria-label="Усиление" />
                dB
              </Gain>
              <HudDivider />
              <button aria-label="Закрепить">
                <Icon w={21} h={30}>
                  <path d="M12 10l5 5l-1.500 1l-1-.3l-2 2v3l-1 .8l-2.700-2.700L6 21.700l-.7-.5l2.800-3.200l-2.600-2.500l.8-1h3l2-2l-.3-1z" fill="#c0c0c0" />
                </Icon>
              </button>
            </Hud>
          </WaveArea>
          <ScaleColumn>
            <DbScale />
            {CHANNELS.map(({ id }) => (
              <ChannelSlot key={id}>
                <ChannelButton aria-label={`Канал ${id}`}>{id}</ChannelButton>
              </ChannelSlot>
            ))}
          </ScaleColumn>
        </Workspace>

        <Scrollbar>
          <Dots cols={14} rows={2} step={2} />
          <Collapse aria-label="Свернуть">
            <svg width="7" height="4" aria-hidden="true"><path d="M0 4L3.500 0L7 4z" fill="#8c8c8c" /></svg>
          </Collapse>
        </Scrollbar>

        <Footer>
          <TimeCode>0:00.000</TimeCode>
          <Transport>
            {TRANSPORT.map(({ label, icon }) => (
              <IconButton key={label} aria-label={label}><Icon>{icon}</Icon></IconButton>
            ))}
          </Transport>
          <ZoomTools>
            {ZOOMS.map(({ label, icon }) => (
              <IconButton key={label} aria-label={label}><Icon>{icon}</Icon></IconButton>
            ))}
          </ZoomTools>
        </Footer>
      </Panel>
    </Page>
  </>
);

export default App;
